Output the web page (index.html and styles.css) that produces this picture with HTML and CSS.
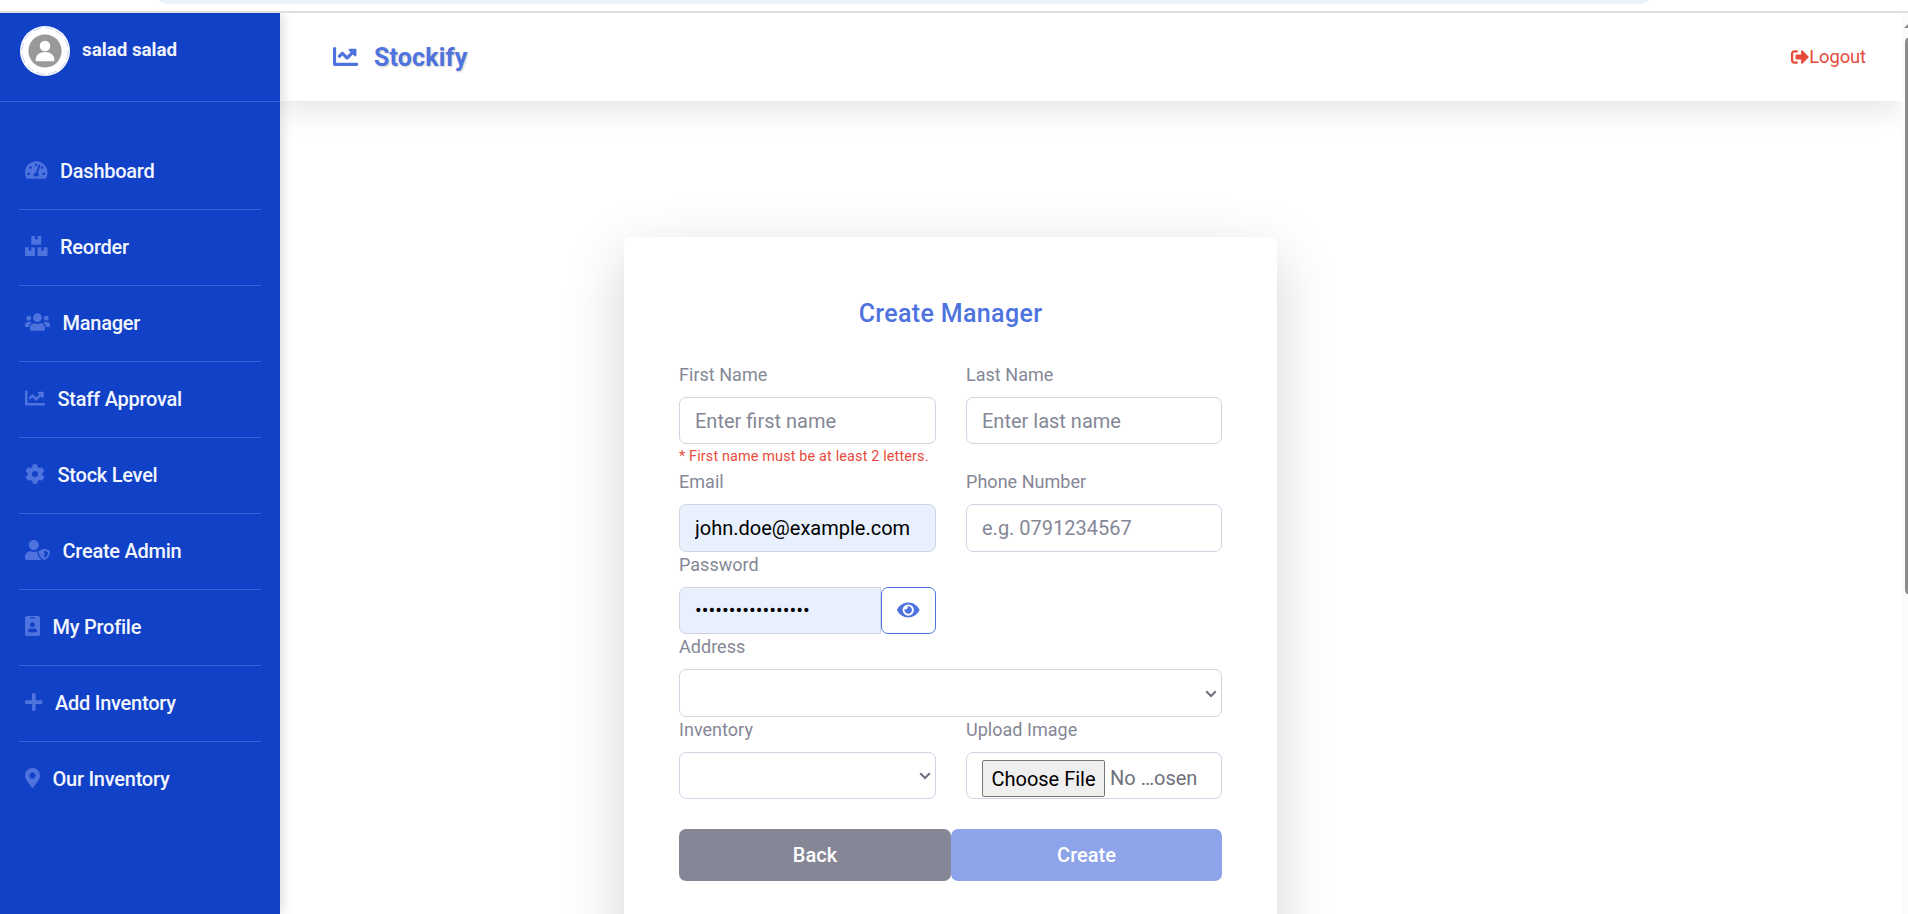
FILE: index.html
```html
<!DOCTYPE html>
<html lang="en">
<head>
<meta charset="utf-8">
<title>Stockify</title>
<link rel="stylesheet" href="styles.css">
</head>
<body>
<div class="browser-edge"><div class="address-pill"></div></div>
<div class="app">
  <aside class="sidebar">
    <div class="profile">
      <div class="avatar">
        <svg viewBox="0 0 50 50"><circle cx="25" cy="25" r="25" fill="#fff"/><circle cx="25" cy="25" r="23.2" fill="none" stroke="#b9c7f2" stroke-width=".8" stroke-dasharray="9 3"/><circle cx="25" cy="25" r="16.6" fill="#999"/><circle cx="25" cy="20" r="5.3" fill="#fff"/><path d="M15.7 35.2v-1.7c0-4.6 3.8-7.6 9.3-7.6s9.3 3 9.3 7.6v1.7z" fill="#fff"/></svg>
      </div>
      <span class="profile-name">salad salad</span>
    </div>
    <nav class="menu">
      <a class="menu-item"><svg class="icon" viewBox="0 0 576 512"><path d="M288 32C128.94 32 0 160.94 0 320c0 52.8 14.25 102.26 39.06 144.8 5.61 9.62 16.3 15.2 27.44 15.2h443c11.14 0 21.83-5.58 27.44-15.2C561.75 422.26 576 372.8 576 320c0-159.06-128.94-288-288-288zm0 64c14.71 0 26.58 10.13 30.32 23.65-1.11 2.26-2.64 4.23-3.45 6.67l-9.22 27.67c-5.13 3.49-10.97 6.01-17.64 6.01-17.67 0-32-14.33-32-32S270.33 96 288 96zM96 384c-17.67 0-32-14.33-32-32s14.33-32 32-32 32 14.33 32 32-14.33 32-32 32zm48-160c-17.67 0-32-14.33-32-32s14.33-32 32-32 32 14.33 32 32-14.33 32-32 32zm246.77-72.41l-61.33 184C343.13 347.33 352 364.54 352 384c0 11.72-3.38 22.55-8.88 32H232.88c-5.5-9.45-8.88-20.28-8.88-32 0-33.94 26.5-61.43 59.9-63.59l61.34-184.01c4.17-12.56 17.73-19.45 30.36-15.17 12.57 4.19 19.35 17.79 15.17 30.36zm14.66 57.2l15.52-46.55c3.47-1.29 7.13-2.23 11.05-2.23 17.67 0 32 14.33 32 32s-14.33 32-32 32c-11.38-.01-20.89-6.28-26.57-15.22zM480 384c-17.67 0-32-14.33-32-32s14.33-32 32-32 32 14.33 32 32-14.33 32-32 32z"/></svg><span>Dashboard</span></a>
      <a class="menu-item"><svg class="icon" viewBox="0 0 576 512"><path d="M560 288h-80v96l-32-21.3-32 21.3v-96h-80c-8.8 0-16 7.2-16 16v192c0 8.8 7.2 16 16 16h224c8.8 0 16-7.2 16-16V304c0-8.8-7.2-16-16-16zm-384-64h224c8.8 0 16-7.2 16-16V16c0-8.8-7.2-16-16-16h-80v96l-32-21.3L256 96V0h-80c-8.8 0-16 7.2-16 16v192c0 8.8 7.2 16 16 16zm64 64h-80v96l-32-21.3L96 384v-96H16c-8.8 0-16 7.2-16 16v192c0 8.8 7.2 16 16 16h224c8.8 0 16-7.2 16-16V304c0-8.8-7.2-16-16-16z"/></svg><span>Reorder</span></a>
      <a class="menu-item"><svg class="icon" viewBox="0 0 640 512"><path d="M96 224c35.3 0 64-28.7 64-64s-28.7-64-64-64-64 28.7-64 64 28.7 64 64 64zm448 0c35.3 0 64-28.7 64-64s-28.7-64-64-64-64 28.7-64 64 28.7 64 64 64zm32 32h-64c-17.6 0-33.5 7.1-45.1 18.6 40.3 22.1 68.9 62 75.1 109.4h66c17.7 0 32-14.3 32-32v-32c0-35.3-28.7-64-64-64zm-256 0c61.9 0 112-50.1 112-112S381.9 32 320 32 208 82.1 208 144s50.1 112 112 112zm76.8 32h-8.3c-20.8 10-43.9 16-68.5 16s-47.6-6-68.5-16h-8.3C179.6 288 128 339.6 128 403.2V432c0 26.5 21.5 48 48 48h288c26.5 0 48-21.5 48-48v-28.8c0-63.6-51.6-115.2-115.2-115.2zm-223.7-13.4C161.5 263.1 145.6 256 128 256H64c-35.3 0-64 28.7-64 64v32c0 17.7 14.3 32 32 32h65.9c6.3-47.4 34.9-87.3 75.2-109.4z"/></svg><span>Manager</span></a>
      <a class="menu-item"><svg class="icon" viewBox="0 0 512 512"><path d="M496 384H64V80c0-8.84-7.16-16-16-16H16C7.16 64 0 71.16 0 80v336c0 17.67 14.33 32 32 32h464c8.84 0 16-7.16 16-16v-32c0-8.84-7.16-16-16-16zM464 96H345.94c-21.38 0-32.09 25.85-16.97 40.97l32.4 32.4L288 242.75l-73.37-73.37c-12.5-12.5-32.76-12.5-45.25 0l-68.69 68.69c-6.25 6.25-6.25 16.38 0 22.63l22.62 22.62c6.25 6.25 16.38 6.25 22.63 0L192 237.25l73.37 73.37c12.5 12.5 32.76 12.5 45.25 0l96-96 32.4 32.4c15.12 15.12 40.97 4.41 40.97-16.97V112c.01-8.84-7.15-16-15.99-16z"/></svg><span>Staff Approval</span></a>
      <a class="menu-item"><svg class="icon" viewBox="0 0 512 512"><path d="M487.4 315.7l-42.6-24.6c4.3-23.2 4.3-47 0-70.2l42.6-24.6c4.9-2.8 7.1-8.6 5.5-14-11.1-35.6-30-67.8-54.7-94.6-3.8-4.1-10-5.1-14.8-2.3L380.8 110c-17.9-15.4-38.5-27.3-60.8-35.1V25.8c0-5.6-3.9-10.5-9.4-11.7-36.7-8.2-74.3-7.8-109.2 0-5.5 1.2-9.4 6.1-9.4 11.7V75c-22.2 7.9-42.8 19.8-60.8 35.1L88.7 85.5c-4.9-2.8-11-1.9-14.8 2.3-24.7 26.7-43.6 58.9-54.7 94.6-1.7 5.4.6 11.2 5.5 14L67.3 221c-4.3 23.2-4.3 47 0 70.2l-42.6 24.6c-4.9 2.8-7.1 8.6-5.5 14 11.1 35.6 30 67.8 54.7 94.6 3.8 4.1 10 5.1 14.8 2.3l42.6-24.6c17.9 15.4 38.5 27.3 60.8 35.1v49.2c0 5.6 3.9 10.5 9.4 11.7 36.7 8.2 74.3 7.8 109.2 0 5.5-1.2 9.4-6.1 9.4-11.7v-49.2c22.2-7.9 42.8-19.8 60.8-35.1l42.6 24.6c4.9 2.8 11 1.9 14.8-2.3 24.7-26.7 43.6-58.9 54.7-94.6 1.5-5.5-.7-11.3-5.6-14.1zM256 336c-44.1 0-80-35.9-80-80s35.9-80 80-80 80 35.9 80 80-35.9 80-80 80z"/></svg><span>Stock Level</span></a>
      <a class="menu-item"><svg class="icon" viewBox="0 0 640 512"><path d="M622.3 271.1l-115.2-45c-4.1-1.6-12.6-3.7-22.2 0l-115.2 45c-10.7 4.2-17.7 14-17.7 24.9 0 111.6 68.7 188.8 132.9 213.9 9.6 3.7 18 1.6 22.2 0C558.4 489.9 640 420.5 640 296c0-10.9-7-20.7-17.7-24.9zM496 462.4V273.3l95.5 37.3c-5.6 87.1-60.9 135.4-95.5 151.8zM224 256c70.7 0 128-57.3 128-128S294.7 0 224 0 96 57.3 96 128s57.3 128 128 128zm96 40c0-2.5.8-4.8 1.1-7.2-2.5-.1-4.9-.8-7.5-.8h-16.7c-22.2 10.2-46.9 16-72.9 16s-50.6-5.8-72.9-16h-16.7C60.2 288 0 348.2 0 422.4V464c0 26.5 21.5 48 48 48h352c6.8 0 13.3-1.5 19.2-4-54-42.9-99.2-116.7-99.2-212z"/></svg><span>Create Admin</span></a>
      <a class="menu-item"><svg class="icon" viewBox="0 0 384 512"><path d="M336 0H48C21.5 0 0 21.5 0 48v416c0 26.5 21.5 48 48 48h288c26.5 0 48-21.5 48-48V48c0-26.5-21.5-48-48-48zM144 32h96c8.8 0 16 7.2 16 16s-7.2 16-16 16h-96c-8.8 0-16-7.2-16-16s7.2-16 16-16zm48 128c35.3 0 64 28.7 64 64s-28.7 64-64 64-64-28.7-64-64 28.7-64 64-64zm112 236.8c0 10.6-10 19.2-22.4 19.2H102.4C90 416 80 407.4 80 396.8v-19.2c0-31.8 30.1-57.6 67.2-57.6h5c12.3 5.1 25.7 8 39.8 8s27.6-2.9 39.8-8h5c37.1 0 67.2 25.8 67.2 57.6v19.2z"/></svg><span>My Profile</span></a>
      <a class="menu-item"><svg class="icon" viewBox="0 0 448 512"><path d="M416 208H272V64c0-17.67-14.33-32-32-32h-32c-17.67 0-32 14.33-32 32v144H32c-17.67 0-32 14.33-32 32v32c0 17.67 14.33 32 32 32h144v144c0 17.67 14.33 32 32 32h32c17.67 0 32-14.33 32-32V304h144c17.67 0 32-14.33 32-32v-32c0-17.67-14.33-32-32-32z"/></svg><span>Add Inventory</span></a>
      <a class="menu-item"><svg class="icon" viewBox="0 0 384 512"><path d="M172.268 501.67C26.97 291.031 0 269.413 0 192 0 85.961 85.961 0 192 0s192 85.961 192 192c0 77.413-26.97 99.031-172.268 309.67-9.535 13.774-29.93 13.773-39.464 0zM192 272c44.183 0 80-35.817 80-80s-35.817-80-80-80-80 35.817-80 80 35.817 80 80 80z"/></svg><span>Our Inventory</span></a>
    </nav>
  </aside>
  <div class="content">
    <header class="topbar">
      <div class="brand">
        <svg class="brand-icon" viewBox="0 0 512 512"><path d="M496 384H64V80c0-8.84-7.16-16-16-16H16C7.16 64 0 71.16 0 80v336c0 17.67 14.33 32 32 32h464c8.84 0 16-7.16 16-16v-32c0-8.84-7.16-16-16-16zM464 96H345.94c-21.38 0-32.09 25.85-16.97 40.97l32.4 32.4L288 242.75l-73.37-73.37c-12.5-12.5-32.76-12.5-45.25 0l-68.69 68.69c-6.25 6.25-6.25 16.38 0 22.63l22.62 22.62c6.25 6.25 16.38 6.25 22.63 0L192 237.25l73.37 73.37c12.5 12.5 32.76 12.5 45.25 0l96-96 32.4 32.4c15.12 15.12 40.97 4.41 40.97-16.97V112c.01-8.84-7.15-16-15.99-16z"/></svg>
        <span>Stockify</span>
      </div>
      <a class="logout"><svg viewBox="0 0 512 512"><path d="M497 273L329 441c-15 15-41 4.5-41-17v-96H152c-13.3 0-24-10.7-24-24v-96c0-13.3 10.7-24 24-24h136V88c0-21.4 25.9-32 41-17l168 168c9.3 9.4 9.3 24.6 0 34zM192 436v-40c0-6.6-5.4-12-12-12H96c-17.7 0-32-14.3-32-32V160c0-17.7 14.3-32 32-32h84c6.6 0 12-5.4 12-12V76c0-6.6-5.4-12-12-12H96c-53 0-96 43-96 96v192c0 53 43 96 96 96h84c6.6 0 12-5.4 12-12z"/></svg><span>Logout</span></a>
    </header>
    <main class="page">
      <form class="card">
        <h1 class="card-title">Create Manager</h1>
        <div class="fields">
          <div class="field"><label>First Name</label><input class="control short" type="text" placeholder="Enter first name"><p class="error">* First name must be at least 2 letters.</p></div>
          <div class="field"><label>Last Name</label><input class="control short" type="text" placeholder="Enter last name"></div>
          <div class="field"><label>Email</label><input class="control filled" type="text" value="john.doe@example.com"></div>
          <div class="field"><label>Phone Number</label><input class="control" type="text" placeholder="e.g. 0791234567"></div>
          <div class="field"><label>Password</label>
            <div class="group"><input class="control filled" type="password" value="abcdefghijklmnopq"><button class="reveal" type="button"><svg viewBox="0 0 576 512"><path d="M572.52 241.4C518.29 135.59 410.93 64 288 64S57.68 135.64 3.48 241.41a32.35 32.35 0 0 0 0 29.19C57.71 376.41 165.07 448 288 448s230.32-71.64 284.52-177.41a32.35 32.35 0 0 0 0-29.19zM288 400a144 144 0 1 1 144-144 143.93 143.93 0 0 1-144 144zm0-240a95.31 95.31 0 0 0-25.31 3.79 47.85 47.85 0 0 1-66.9 66.9A95.78 95.78 0 1 0 288 160z"/></svg></button></div>
          </div>
          <div class="field wide"><label>Address</label><div class="control select"><svg viewBox="0 0 12 8"><path d="M1.2 1.2 6 6l4.8-4.8"/></svg></div></div>
          <div class="field"><label>Inventory</label><div class="control select"><svg viewBox="0 0 12 8"><path d="M1.2 1.2 6 6l4.8-4.8"/></svg></div></div>
          <div class="field"><label>Upload Image</label><div class="control file"><span class="file-button">Choose File</span><span class="file-name">No …osen</span></div></div>
        </div>
        <div class="actions"><button class="btn back" type="button">Back</button><button class="btn create" type="button">Create</button></div>
      </form>
    </main>
  </div>
  <div class="scrollbar"><div class="scroll-arrow"></div><div class="scroll-thumb"></div></div>
</div>
</body>
</html>
```

FILE: styles.css
```css
* { box-sizing: border-box; }
body { margin: 0; height: 914px; overflow: hidden; background: #fff; font-family: Roboto, "Liberation Sans", sans-serif; display: flex; flex-direction: column; }
.browser-edge { height: 13px; flex: none; border-bottom: 2px solid #dfdfdf; padding: 0 252px 0 151px; overflow: hidden; }
.address-pill { height: 36px; margin-top: -32px; border-radius: 18px; background: #edf2fa; }
.app { height: 901px; display: flex; overflow: hidden; }

.sidebar { width: 280px; flex: none; background: #1041c7; box-shadow: 2px 0 12px rgba(0,0,0,.15); position: relative; z-index: 2; }
.profile { height: 89px; border-bottom: 1px solid #3a62d2; padding: 13px 20px; display: flex; gap: 12px; }
.avatar, .avatar svg { width: 50px; height: 50px; display: block; }
.profile-name { color: #f0f3fc; font-size: 18.75px; font-weight: 700; line-height: 48px; }
.menu { padding: 32px 19px 0; }
.menu-item { height: 76px; border-bottom: 1px solid #3a62d2; display: flex; align-items: center; gap: 12.5px; padding: 0 0 1px 6px; color: #f3f6fd; font-size: 20px; font-weight: 500; letter-spacing: -.25px; }
.menu-item:last-child { border-bottom-color: transparent; }
.icon { height: 20px; fill: #4e73df; margin-top: -2px; }

.content { flex: 1; min-width: 0; background: #fff; display: flex; flex-direction: column; overflow: hidden; }
.topbar { height: 88px; flex: none; background: #fff; box-shadow: 0 10px 30px rgba(0,0,0,.1); display: flex; justify-content: space-between; align-items: center; padding: 0 35px 0 53px; }
.brand { display: flex; align-items: center; gap: 16px; color: #4e73df; font-size: 25px; font-weight: 700; letter-spacing: .15px; text-shadow: 1px 1px 2px rgba(0,0,0,.2); }
.brand-icon { width: 25px; height: 25px; margin-top: -1px; fill: #4e73df; }
.logout { display: flex; align-items: center; color: #e74a3b; font-size: 18.4px; letter-spacing: -.1px; padding-bottom: 1px; }
.logout svg { width: 18px; fill: #e74a3b; }

.page { flex: 1; padding: 136px 0 0 344px; }
.card { width: 653px; height: 740px; border-radius: 6px; background: #fff; padding: 57px 55px; box-shadow: 0 20px 60px rgba(0,0,0,.175); }
.card-title { margin: 0 0 29px; height: 39px; line-height: 39px; text-align: center; font-size: 25px; font-weight: 500; letter-spacing: .34px; color: #4e73df; }
.fields { display: grid; grid-template-columns: 257px 256px; column-gap: 30px; }
.field label { display: block; height: 35px; line-height: 25px; font-size: 18px; letter-spacing: .03px; color: #858796; }
.wide { grid-column: 1 / -1; }
.control { display: block; width: 100%; height: 47.5px; margin: 0; border: 1px solid #d1d3e2; border-radius: 7px; padding: 0 15px; background: #fff; font-family: inherit; font-size: 20px; color: #6e707e; }
.control::placeholder { color: #858796; opacity: 1; }
.short { height: 47px; }
.filled { background: #e8f0fe; color: #000; }
.error { margin: 0; height: 25px; line-height: 26px; font-size: 14.4px; letter-spacing: .15px; color: #e74a3b; white-space: nowrap; }
.group { display: flex; }
.group .control { width: 202px; border-radius: 7px 0 0 7px; }
.reveal { width: 55px; height: 47.5px; border: 1px solid #4e73df; border-radius: 7px; background: #fff; padding: 0; display: flex; align-items: center; justify-content: center; }
.reveal svg { width: 22.5px; fill: #4e73df; }
.select { display: flex; align-items: center; justify-content: flex-end; padding: 2px 4px 0 0; }
.select svg { width: 12px; height: 8px; fill: none; stroke: #6e707e; stroke-width: 2; }
.file { display: flex; align-items: flex-start; gap: 5px; padding-top: 7px; white-space: nowrap; }
.file-button { width: 123px; height: 37px; border: 1px solid #767676; border-radius: 2px; background: #efefef; color: #000; line-height: 37px; text-align: center; }
.file-name { line-height: 36px; }
.actions { display: flex; margin-top: 30px; }
.btn { height: 52px; border: 0; border-radius: 7px; color: #fff; font-family: inherit; font-size: 20px; font-weight: 500; }
.back { width: 272px; background: #858796; }
.create { width: 271px; background: #8da4ea; }

.scrollbar { width: 7px; flex: none; background: #fbfbfb; padding: 8px 0 0 3px; overflow: hidden; }
.scroll-arrow { width: 14px; height: 7px; background: #8b8b8b; clip-path: polygon(50% 0, 100% 100%, 0 100%); }
.scroll-thumb { width: 10px; height: 558px; margin: 9px 0 0 1px; border-radius: 5px; background: #8b8b8b; }
```
